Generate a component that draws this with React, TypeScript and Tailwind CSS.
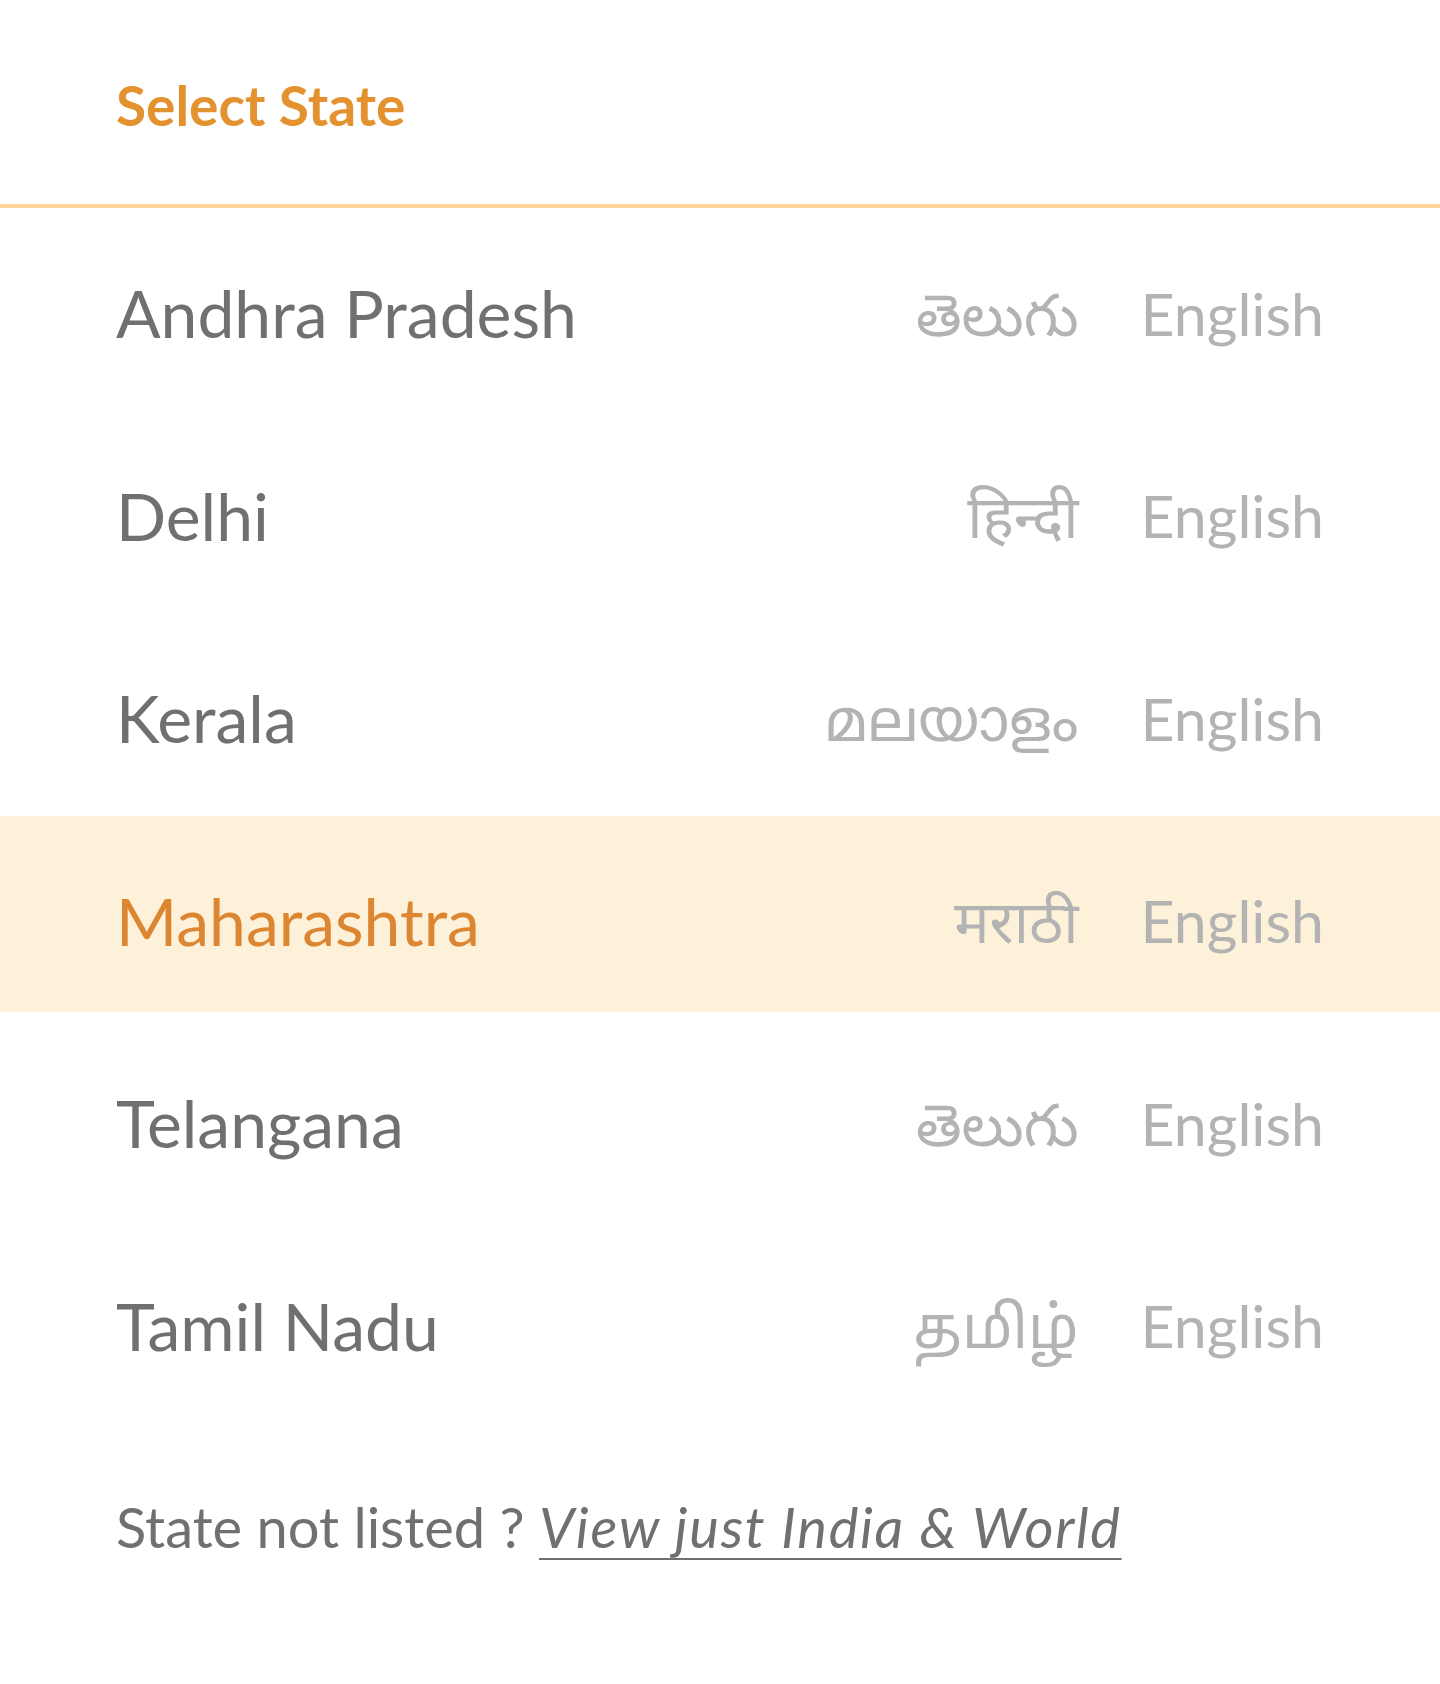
import React from "react";

const STATES = [
  { name: "Andhra Pradesh", native: "తెలుగు" },
  { name: "Delhi", native: "हिन्दी" },
  { name: "Kerala", native: "മലയാളം" },
  { name: "Maharashtra", native: "मराठी", active: true },
  { name: "Telangana", native: "తెలుగు" },
  { name: "Tamil Nadu", native: "தமிழ்" },
];

const FONT =
  "font-['Lato','Noto_Sans','Noto_Sans_Telugu','Noto_Sans_Devanagari','Noto_Sans_Malayalam','Noto_Sans_Tamil',sans-serif]";

export default function App() {
  return (
    <div className={`min-h-screen bg-white ${FONT}`}>
      {/* header */}
      <header className="h-[208px] flex items-center px-[116px] pt-[6px] border-b-4 border-[#FFD29A]">
        <h1 className="text-[55px] font-bold text-[#E3922F] leading-none">
          Select State
        </h1>
      </header>

      {/* state list */}
      <ul className="flex flex-col gap-[6.6px]">
        {STATES.map((s) => (
          <li
            key={s.name}
            className={`h-[196px] flex items-center justify-between px-[116px] pt-[14px] cursor-pointer ${
              s.active ? "bg-[#FEF1D9]" : ""
            }`}
          >
            <span
              className={`text-[66px] leading-none ${
                s.active ? "text-[#DC8632]" : "text-[#707070]"
              }`}
            >
              {s.name}
            </span>
            <div className="flex items-center gap-[62px] text-[#B3B3B3] text-[59px] leading-none">
              <span>{s.native}</span>
              <span>English</span>
            </div>
          </li>
        ))}
      </ul>

      {/* footer */}
      <div className="h-[196px] mt-[6.6px] pt-[10px] flex items-center px-[116px] text-[56px] text-[#707070] leading-none">
        <span>State not listed ?&nbsp;</span>
        <a className="italic underline underline-offset-[10px] decoration-2 [text-decoration-skip-ink:none] tracking-[0.03em] cursor-pointer">
          View just India &amp; World
        </a>
      </div>
    </div>
  );
}
